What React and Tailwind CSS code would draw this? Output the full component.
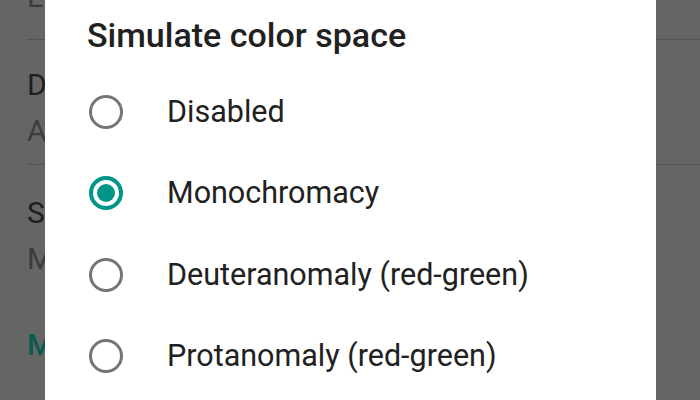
import React from 'react';

const options = [
  { label: 'Disabled', checked: false },
  { label: 'Monochromacy', checked: true },
  { label: 'Deuteranomaly (red-green)', checked: false },
  { label: 'Protanomaly (red-green)', checked: false },
];

function Radio({ checked }) {
  if (checked) {
    return (
      <span className="flex h-[34px] w-[34px] items-center justify-center rounded-full border-[4px] border-[#009688]">
        <span className="h-[18px] w-[18px] rounded-full bg-[#009688]" />
      </span>
    );
  }
  return <span className="block h-[34px] w-[34px] rounded-full border-[3.5px] border-[#757575]" />;
}

export default function App() {
  return (
    <div className="relative h-[400px] w-[700px] overflow-hidden bg-[#656565] font-['Roboto','Liberation_Sans',sans-serif]">
      {/* settings list behind the scrim */}
      <div className="flex flex-col pl-[27px] text-[30px] leading-none">
        <div className="h-[40px] border-b border-[#555]">
          <p className="-mt-[18px] text-[#3a3a3a]">Li</p>
        </div>
        <div className="flex h-[125px] flex-col gap-[16px] border-b border-[#555] pt-[30px]">
          <p className="text-[#1e1e1e]">Display</p>
          <p className="text-[#3c3c3c]">A</p>
        </div>
        <div className="flex flex-col gap-[16px] pt-[33px]">
          <p className="text-[#1e1e1e]">Simulate</p>
          <p className="text-[#3c3c3c]">M</p>
        </div>
        <p className="mt-[56px] font-medium text-[#0a5a4f]">M</p>
      </div>

      {/* dialog */}
      <div className="absolute bottom-0 left-[45px] top-0 w-[611px] bg-white">
        <h2 className="pl-[42px] pt-[18px] text-[34px] font-medium leading-[34px] text-[#212121]">
          Simulate color space
        </h2>
        <div className="mt-[19px] flex flex-col">
          {options.map((o) => (
            <div key={o.label} className="flex h-[81.5px] items-center gap-[44px] pl-[44px]">
              <Radio checked={o.checked} />
              <span className="text-[30.5px] leading-none text-[#212121]">{o.label}</span>
            </div>
          ))}
        </div>
      </div>
    </div>
  );
}
